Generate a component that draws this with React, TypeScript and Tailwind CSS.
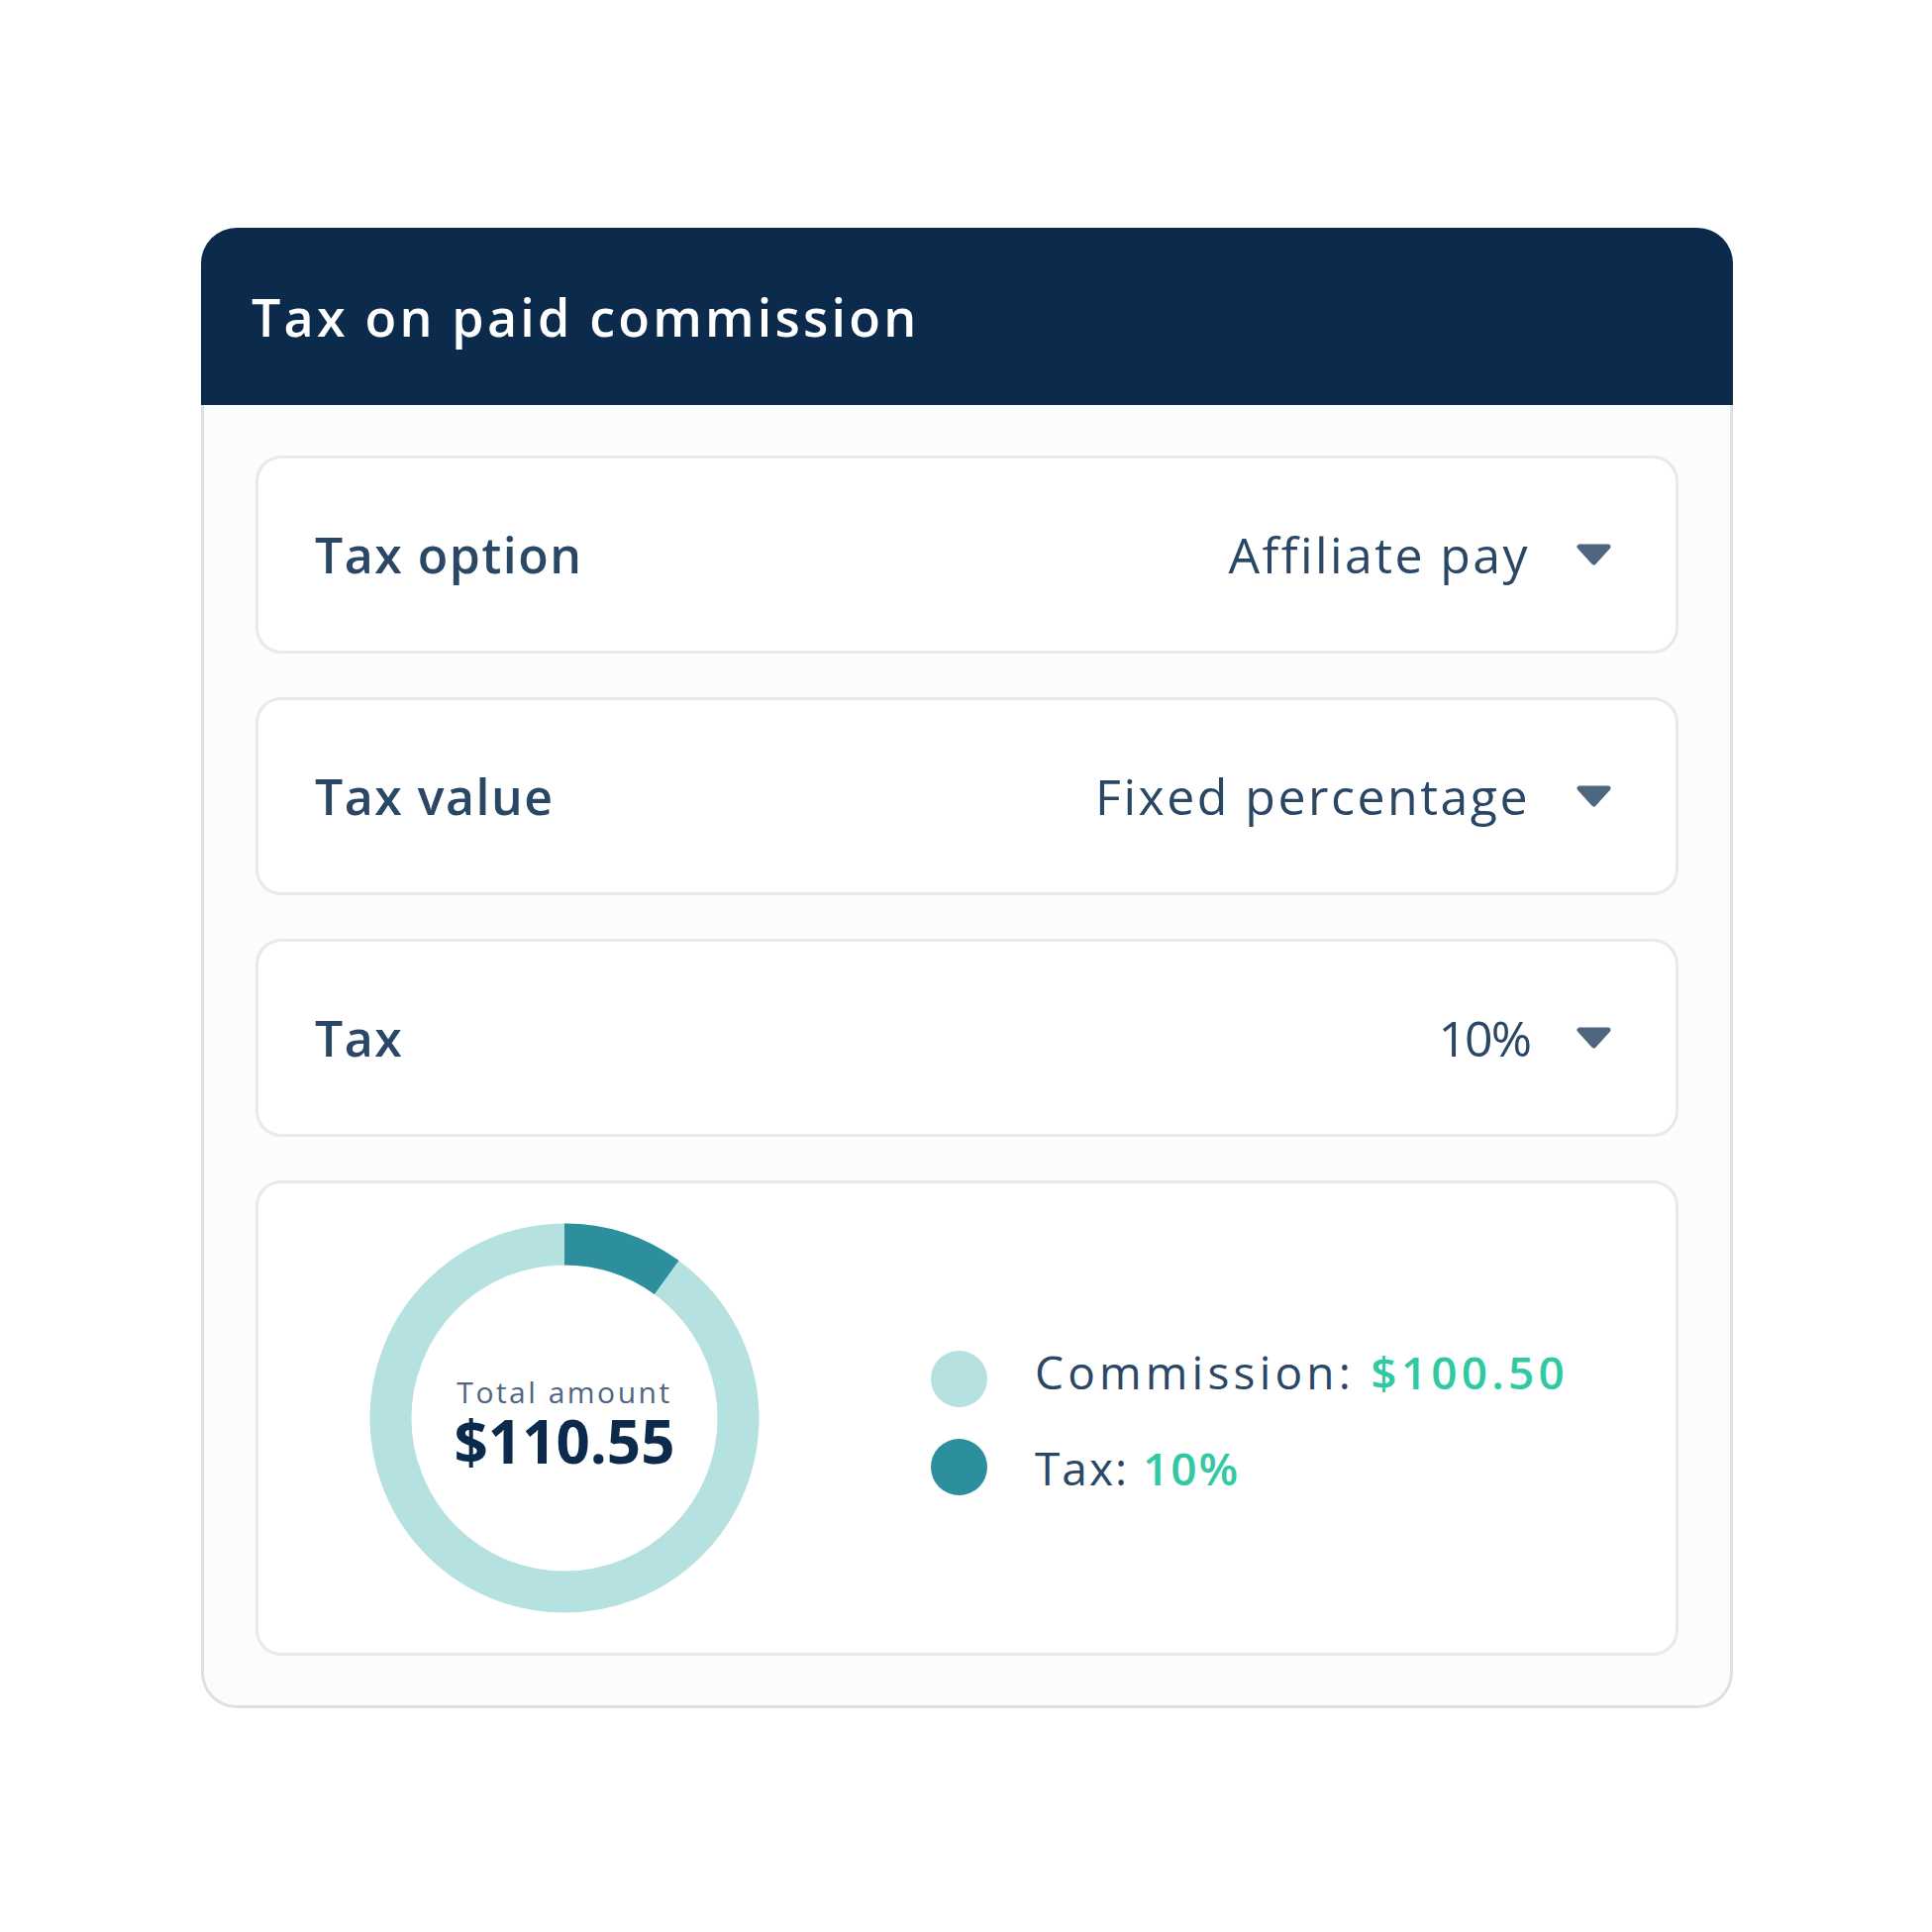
import React from "react";

function Caret() {
  return (
    <svg width="35" height="22" viewBox="0 0 35 22" className="shrink-0">
      <polygon
        points="3,3 32,3 17.5,19"
        fill="#4e6680"
        stroke="#4e6680"
        strokeWidth="5"
        strokeLinejoin="round"
      />
    </svg>
  );
}

function Row({ label, value, valueClass }: { label: string; value: string; valueClass: string }) {
  return (
    <div className="flex h-[200px] items-center justify-between rounded-[26px] border-[3px] border-[#e8e9ec] bg-white pl-[57px] pr-[65px]">
      <span className="text-[50px] font-semibold leading-none tracking-[1.5px] text-[#2a4765]">{label}</span>
      <div className="flex items-center gap-[47px]">
        <span className={`text-[50px] font-normal leading-none text-[#2a4765] ${valueClass}`}>{value}</span>
        <Caret />
      </div>
    </div>
  );
}

function Donut() {
  const r = 175.5;
  const c = 2 * Math.PI * r;
  return (
    <div className="relative h-[394px] w-[394px] shrink-0">
      <svg width="394" height="394" viewBox="0 0 394 394" className="absolute inset-0">
        <circle cx="197" cy="197" r={r} fill="none" stroke="#b5e1e0" strokeWidth="42" />
        <circle
          cx="197"
          cy="197"
          r={r}
          fill="none"
          stroke="#2d8f9e"
          strokeWidth="42"
          strokeDasharray={`${c * 0.1} ${c}`}
          transform="rotate(-90 197 197)"
        />
      </svg>
      <div className="absolute inset-0 flex flex-col items-center justify-center pt-[12px]">
        <span className="text-[30px] leading-none tracking-[2.5px] text-[#4f6580]">Total amount</span>
        <span className="mt-[4px] text-[60px] font-bold leading-none text-[#0c2b4c]">$110.55</span>
      </div>
    </div>
  );
}

export default function App() {
  return (
    <div className="min-h-[1951px] w-[1951px] bg-white font-['Open_Sans',sans-serif]">
      <div className="pl-[203px] pt-[230px]">
        <div className="w-[1547px]">
          <div className="flex h-[179px] items-center rounded-t-[36px] bg-[#0c2b4c] px-[51px]">
            <h1 className="text-[52px] font-semibold leading-none tracking-[3.2px] text-white">Tax on paid commission</h1>
          </div>
          <div className="flex flex-col gap-[44px] rounded-b-[36px] border-x-[3px] border-b-[3px] border-[#dfdfe9] bg-[#fcfcfc] px-[52px] pb-[50px] pt-[51px]">
            <Row label="Tax option" value="Affiliate pay" valueClass="tracking-[2.4px]" />
            <Row label="Tax value" value="Fixed percentage" valueClass="tracking-[2.5px]" />
            <Row label="Tax" value="10%" valueClass="tracking-[-2px]" />
            <div className="flex h-[480px] items-center rounded-[26px] border-[3px] border-[#e8e9ec] bg-white pl-[112px]">
              <Donut />
              <div className="ml-[173px] mt-[8px] flex flex-col gap-[31px]">
                <div className="flex items-center gap-[48px]">
                  <span className="h-[57px] w-[57px] shrink-0 rounded-full bg-[#b5e1e0]" />
                  <span className="pb-[14px] text-[46px] leading-none tracking-[4.2px] text-[#2a4765]">
                    Commission: <span className="font-semibold text-[#30c9a3]">$100.50</span>
                  </span>
                </div>
                <div className="flex items-center gap-[48px]">
                  <span className="h-[57px] w-[57px] shrink-0 rounded-full bg-[#2d8f9e]" />
                  <span className="text-[46px] leading-none tracking-[2px] text-[#2a4765]">
                    Tax: <span className="font-semibold text-[#30c9a3]">10%</span>
                  </span>
                </div>
              </div>
            </div>
          </div>
        </div>
      </div>
    </div>
  );
}
